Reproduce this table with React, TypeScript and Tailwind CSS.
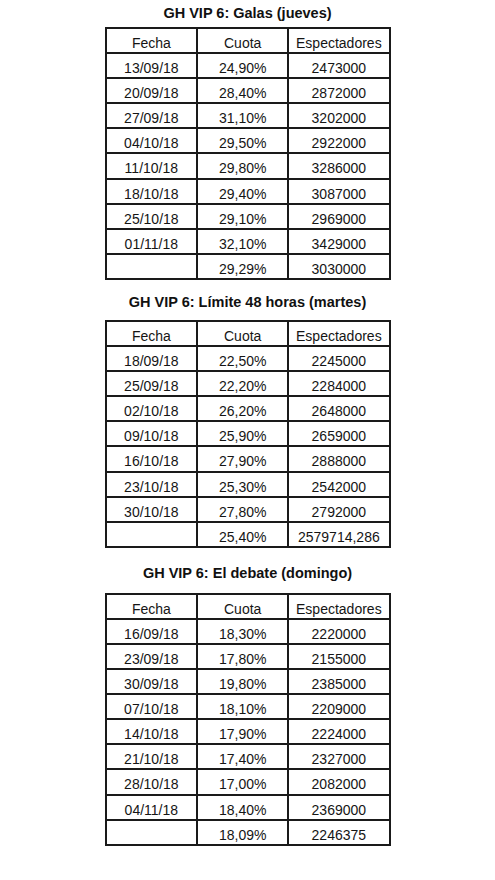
import React from "react";

type Row = [string, string, string];

const t1: Row[] = [
  ["13/09/18", "24,90%", "2473000"],
  ["20/09/18", "28,40%", "2872000"],
  ["27/09/18", "31,10%", "3202000"],
  ["04/10/18", "29,50%", "2922000"],
  ["11/10/18", "29,80%", "3286000"],
  ["18/10/18", "29,40%", "3087000"],
  ["25/10/18", "29,10%", "2969000"],
  ["01/11/18", "32,10%", "3429000"],
  ["", "29,29%", "3030000"],
];

const t2: Row[] = [
  ["18/09/18", "22,50%", "2245000"],
  ["25/09/18", "22,20%", "2284000"],
  ["02/10/18", "26,20%", "2648000"],
  ["09/10/18", "25,90%", "2659000"],
  ["16/10/18", "27,90%", "2888000"],
  ["23/10/18", "25,30%", "2542000"],
  ["30/10/18", "27,80%", "2792000"],
  ["", "25,40%", "2579714,286"],
];

const t3: Row[] = [
  ["16/09/18", "18,30%", "2220000"],
  ["23/09/18", "17,80%", "2155000"],
  ["30/09/18", "19,80%", "2385000"],
  ["07/10/18", "18,10%", "2209000"],
  ["14/10/18", "17,90%", "2224000"],
  ["21/10/18", "17,40%", "2327000"],
  ["28/10/18", "17,00%", "2082000"],
  ["04/11/18", "18,40%", "2369000"],
  ["", "18,09%", "2246375"],
];

function Table({ rows }: { rows: Row[] }) {
  const all: Row[] = [["Fecha", "Cuota", "Espectadores"], ...rows];
  return (
    <div className="mx-auto w-[286px] border-2 border-[#1a1a1a]">
      {all.map((r, i) => (
        <div
          key={i}
          className={
            i < all.length - 1
              ? "flex h-[25.1px] border-b-2 border-[#1a1a1a]"
              : "flex h-[23.1px]"
          }
        >
          <div className="w-[91.7px] shrink-0 border-r-2 border-[#1a1a1a] pt-[6px] text-center text-[14px] leading-[16px] text-[#151515]">
            {r[0]}
          </div>
          <div className="w-[91px] shrink-0 border-r-2 border-[#1a1a1a] pt-[6px] text-center text-[14px] leading-[16px] text-[#151515]">
            {r[1]}
          </div>
          <div className="flex-1 pt-[6px] text-center text-[14px] leading-[16px] text-[#151515]">
            {r[2]}
          </div>
        </div>
      ))}
    </div>
  );
}

export default function App() {
  return (
    <div
      className="w-[495px] h-[880px] bg-white"
      style={{ fontFamily: '"Liberation Sans", Arial, sans-serif' }}
    >
      <div className="h-[27px] pt-[4px] text-center text-[14.5px] font-bold leading-[18px] text-[#111]">
        GH VIP 6: Galas (jueves)
      </div>
      <Table rows={t1} />
      <div className="h-[40px] pt-[13px] text-center text-[14.5px] font-bold leading-[18px] text-[#111]">
        GH VIP 6: Límite 48 horas (martes)
      </div>
      <Table rows={t2} />
      <div className="h-[45px] pt-[16px] text-center text-[14.5px] font-bold leading-[18px] text-[#111]">
        GH VIP 6: El debate (domingo)
      </div>
      <Table rows={t3} />
    </div>
  );
}
